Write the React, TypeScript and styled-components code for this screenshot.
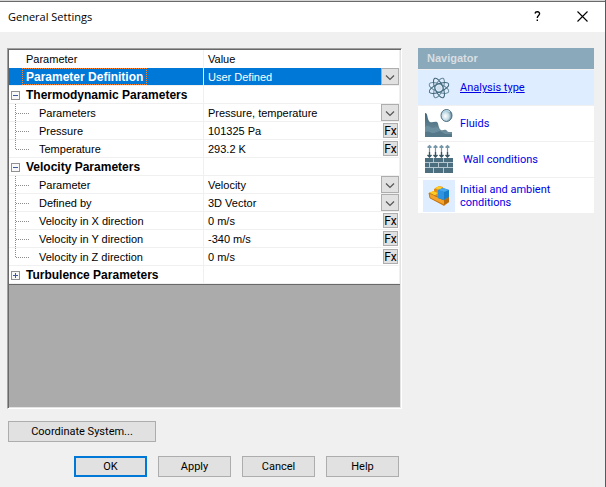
import React, { useState } from "react";
import styled, { createGlobalStyle, css } from "styled-components";

const Global = createGlobalStyle`
  *, *::before, *::after { box-sizing: border-box; }
  body { margin: 0; background: #f0f0f0; }
  button, input, select { font: inherit; color: inherit; margin: 0; }
  svg { display: block; }
`;

const uiFont = css`
  font-family: "Liberation Sans", Arial, sans-serif;
`;

const narrowFont = css`
  font-family: Roboto, "Liberation Sans", sans-serif;
`;

const Dialog = styled.main`
  ${uiFont}
  font-size: 11px;
  color: #000;
  min-height: 100vh;
  display: flex;
  flex-direction: column;
  background: #f0f0f0;
  border-right: 1px solid #58595c;
`;

const TitleBar = styled.header`
  display: flex;
  align-items: center;
  height: 32px;
  flex: none;
  padding-left: 8px;
  background: #fff;
  border-top: 1px solid #d6d6d6;
  box-shadow: inset 0 1px #6a6a6c;
`;

const Title = styled.h1`
  flex: 1;
  margin: 0;
  font: 400 11px/18px "Open Sans", "Noto Sans", sans-serif;
`;

const CaptionButton = styled.button`
  width: 45px;
  height: 28px;
  padding: 0;
  border: 0;
  background: transparent;
  display: grid;
  place-items: center;
`;

const Body = styled.div`
  flex: 1;
  display: flex;
  gap: 16px;
  padding: 16px 11px 10px 7px;
`;

const Editor = styled.section`
  flex: 1;
  min-width: 0;
  display: flex;
  flex-direction: column;
`;

const Pane = styled.div`
  flex: 1;
  background: #ababab;
  border: 1px solid;
  border-color: #a0a0a0 #fff #fff #a0a0a0;
  box-shadow: inset 1px 1px #696969, inset -1px -1px #e3e3e3;
  padding: 1px;
`;

const Grid = styled.table`
  width: 100%;
  table-layout: fixed;
  border-collapse: separate;
  border-spacing: 0;
  background: #fff;
  border-bottom: 1px solid #696969;
`;

const NameColumn = styled.col`
  width: 195px;
`;

const Row = styled.tr<{ $selected?: boolean }>`
  height: 18px;
  color: ${(p) => (p.$selected ? "#fff" : "#000")};
  background: ${(p) => (p.$selected ? "#0078d7" : "#fff")};
`;

const cell = css`
  height: 18px;
  padding: 0;
  border-bottom: 1px solid #f0f0f0;
  border-right: 1px solid #f0f0f0;
  text-align: left;
  font-weight: 400;
  line-height: 15px;
  white-space: nowrap;
`;

const HeadCell = styled.th<{ $first?: boolean }>`
  ${cell}
  border-bottom-color: #fff;
  padding-top: 2px;
  padding-left: ${(p) => (p.$first ? 17 : 4)}px;
`;

const NameCell = styled.th`
  ${cell}
`;

const ValueCell = styled.td`
  ${cell}
`;

const NameBox = styled.div`
  display: flex;
  align-items: center;
  height: 17px;
`;

const Gutter = styled.span`
  flex: none;
  width: 13px;
  height: 17px;
  padding-top: 2px;
  display: grid;
  place-items: center;
`;

const Toggle = styled.button`
  width: 9px;
  height: 9px;
  padding: 0;
  border: 0;
  background: none;
  display: block;
`;

const GroupLabel = styled.span<{ $focused?: boolean }>`
  font-weight: 700;
  font-size: 12px;
  line-height: 13px;
  padding: 2px 3px 0;
  border: 1px ${(p) => (p.$focused ? "dotted #ff8728" : "solid transparent")};
`;

const Leaf = styled.label`
  flex: 1;
  padding-top: 2px;
`;

const Branch = styled.svg`
  flex: none;
  width: 30px;
  height: 18px;
  margin-bottom: -1px;
`;

const Field = styled.div`
  display: flex;
  align-items: center;
  height: 17px;
`;

const ValueInput = styled.input`
  flex: 1;
  min-width: 0;
  height: 17px;
  padding: 0 0 0 4px;
  border: 0;
  outline: 0;
  background: transparent;
`;

const FxButton = styled.button`
  ${narrowFont}
  width: 15px;
  height: 15px;
  flex: none;
  margin-right: 1px;
  padding: 0;
  font-size: 12px;
  line-height: 14px;
  border: 1px solid #adadad;
  background: #e1e1e1;
  display: flex;
  justify-content: center;
`;

const Combo = styled.div`
  display: grid;
  grid-template-columns: 1fr 18px;
  height: 17px;
`;

const ComboSelect = styled.select`
  grid-area: 1 / 1 / 2 / 3;
  appearance: none;
  height: 17px;
  padding: 2px 18px 0 4px;
  border: 0;
  outline: 0;
  background: transparent;
`;

const ComboArrow = styled.span`
  grid-area: 1 / 2 / 2 / 3;
  pointer-events: none;
  display: grid;
  place-items: center;
  padding-top: 2px;
  border: 1px solid #adadad;
  background: #e1e1e1;
`;

const PushButton = styled.button<{ $wide?: boolean; $default?: boolean }>`
  ${narrowFont}
  width: ${(p) => (p.$wide ? 148 : 73)}px;
  height: 21px;
  padding: 1px 0 0;
  font-size: 11px;
  line-height: 16px;
  background: #e1e1e1;
  border: ${(p) => (p.$default ? "2px solid #0078d7" : "1px solid #adadad")};
`;

const ToolRow = styled.div`
  display: flex;
  margin: 12px 0 14px 1px;
`;

const ActionRow = styled.div`
  display: flex;
  justify-content: flex-end;
  gap: 11px;
  padding-right: 3px;
`;

const Navigator = styled.nav`
  width: 176px;
  flex: none;
`;

const NavHeader = styled.h2`
  margin: 0;
  height: 21px;
  padding-left: 9px;
  font-size: 11px;
  line-height: 21px;
  font-weight: 700;
  color: #d9dee2;
  background: #8aa9ba;
`;

const NavList = styled.ul`
  margin: 0;
  padding: 1px 0 0;
  list-style: none;
  display: grid;
  gap: 1px;
`;

const NavItem = styled.li<{ $current?: boolean }>`
  display: flex;
  align-items: center;
  min-height: 35px;
  padding-left: 5px;
  background: ${(p) => (p.$current ? "#deedff" : "#fff")};
`;

const NavIcon = styled.svg`
  width: 32px;
  height: 32px;
  flex: none;
`;

const NavLink = styled.a<{ $current?: boolean; $indent?: boolean }>`
  ${narrowFont}
  margin-left: ${(p) => (p.$indent ? 8 : 5)}px;
  color: #0000e6;
  font-size: 11px;
  line-height: 13px;
  text-decoration: ${(p) => (p.$current ? "underline" : "none")};
`;

function Chevron() {
  return (
    <svg width="10" height="7" viewBox="0 0 10 7" aria-hidden="true">
      <path d="M1 1.5l4 4 4-4" fill="none" stroke="#555" strokeWidth="1.2" />
    </svg>
  );
}

function ToggleGlyph({ open }: { open: boolean }) {
  return (
    <svg width="9" height="9" viewBox="0 0 9 9" shapeRendering="crispEdges" aria-hidden="true">
      <rect x="0.5" y="0.5" width="8" height="8" fill="#f8f8f8" stroke="#919191" />
      <path d={open ? "M2 4.5h5" : "M2 4.5h5M4.5 2v5"} stroke="#3c5a9c" />
    </svg>
  );
}

function AtomIcon() {
  return (
    <NavIcon viewBox="0 0 32 32" aria-hidden="true">
      <g fill="none" strokeWidth="1">
        {[22, 67, 112, 157].map((a, i) => (
          <ellipse
            key={a}
            cx="16"
            cy="16"
            rx="10.5"
            ry="4"
            stroke={i % 2 ? "#3f6678" : "#66899a"}
            transform={`rotate(${a} 16 16)`}
          />
        ))}
      </g>
      <circle cx="16" cy="16" r="2.5" fill="#cfe0ec" />
    </NavIcon>
  );
}

function FluidsIcon() {
  return (
    <NavIcon viewBox="0 0 32 32" aria-hidden="true">
      <defs>
        <linearGradient id="liquid" x1="0" y1="0" x2="0" y2="1">
          <stop offset="0" stopColor="#3f6577" />
          <stop offset="1" stopColor="#7795a4" />
        </linearGradient>
        <radialGradient id="drop" cx="0.4" cy="0.55" r="0.6">
          <stop offset="0" stopColor="#fff" />
          <stop offset="0.55" stopColor="#c4dbe6" />
          <stop offset="1" stopColor="#557b8e" />
        </radialGradient>
      </defs>
      <path
        d="M2 5c3 0 2 5 4 8 2 3 5 0 8 1 2 2 1 6 4 8 2 1 3-1 5 0s1 2 3 2h3v5H2z"
        fill="url(#liquid)"
      />
      <path d="M2 19c3-3 5 1 8 1s3-2 6 1l4 4-18 3z" fill="#6c8fa0" />
      <path d="M2 24c4-2 6 2 9 1l6-2 5 3 7 0v3H2z" fill="#56798a" />
      <ellipse cx="23.5" cy="7.5" rx="5.5" ry="6" fill="url(#drop)" stroke="#496e80" />
      <path d="M20 4.5c2-2 5-2 7-.5" fill="none" stroke="#b9d6e4" strokeWidth="1.5" />
    </NavIcon>
  );
}

function WallIcon() {
  return (
    <NavIcon viewBox="0 0 32 32" aria-hidden="true">
      <path
        d="M6.5 8V1.5m-2 2 2-2 2 2m4 4.5V1.5m-2 2 2-2 2 2m4 4.5V1.5m-2 2 2-2 2 2m4 4.5V1.5m-2 2 2-2 2 2"
        fill="none"
        stroke="#7697a7"
        strokeWidth="1.2"
      />
      <path
        d="M6.5 8v5m-2-2 2 2 2-2m4-3v5m-2-2 2 2 2-2m4-3v5m-2-2 2 2 2-2m4-3v5m-2-2 2 2 2-2"
        fill="none"
        stroke="#365564"
        strokeWidth="1.4"
      />
      <path d="M2 14h28v15H2z" fill="#4c6f80" />
      <path
        d="M2 18.5h28M2 23.5h28M10.5 14v4m10-4v4M6.5 19v4m9-4v4m9-4v4M10.5 24v5m10-5v5"
        stroke="#b4c7d0"
        strokeWidth="1"
        shapeRendering="crispEdges"
      />
    </NavIcon>
  );
}

function AmbientIcon() {
  return (
    <NavIcon viewBox="0 0 32 32" aria-hidden="true">
      <path d="M0 0h32v32H0z" fill="#deedff" />
      <path d="M6 13l5-2V9l5-3 4 1v4l6 3v8l-5 4L7 18z" fill="#e28b16" />
      <path d="M6 13l15 7v5L7 18z" fill="#f5a32a" />
      <path d="M6 13l4-2 5 2-4 3zm6-5 4-2 4 2-4 2z" fill="#ffcb25" />
      <path d="M21 20l5-3v5l-5 3z" fill="#b96b0c" />
      <path d="M6 13l15 7M6 13l1 5 14 7" fill="none" stroke="#b36c16" strokeWidth="0.8" />
      <path d="M15 10l5-2 6 2v7l-5 3-6-2z" fill="#157dca" />
      <path d="M15 10l5-2 6 2-5 2z" fill="#48a7ec" />
      <path d="M15 10l6 2v8l-6-2z" fill="#2f93e0" />
    </NavIcon>
  );
}

type Property = { id: string; name: string; value: string; kind: "combo" | "fx" };

const thermodynamic: Property[] = [
  { id: "thermo-set", name: "Parameters", value: "Pressure, temperature", kind: "combo" },
  { id: "pressure", name: "Pressure", value: "101325 Pa", kind: "fx" },
  { id: "temperature", name: "Temperature", value: "293.2 K", kind: "fx" },
];

const velocity: Property[] = [
  { id: "velocity-kind", name: "Parameter", value: "Velocity", kind: "combo" },
  { id: "defined-by", name: "Defined by", value: "3D Vector", kind: "combo" },
  { id: "velocity-x", name: "Velocity in X direction", value: "0 m/s", kind: "fx" },
  { id: "velocity-y", name: "Velocity in Y direction", value: "-340 m/s", kind: "fx" },
  { id: "velocity-z", name: "Velocity in Z direction", value: "0 m/s", kind: "fx" },
];

function ComboField({ id, value, label }: { id: string; value: string; label?: string }) {
  return (
    <Combo>
      <ComboSelect id={id} aria-label={label} defaultValue={value}>
        <option>{value}</option>
      </ComboSelect>
      <ComboArrow>
        <Chevron />
      </ComboArrow>
    </Combo>
  );
}

function PropertyRow({ item, last }: { item: Property; last: boolean }) {
  return (
    <Row>
      <NameCell scope="row">
        <NameBox>
          <Branch viewBox="0 0 30 18" shapeRendering="crispEdges" aria-hidden="true">
            <path
              d={last ? "M6.5 0v10M7 9.5h13" : "M6.5 0v18M7 9.5h13"}
              stroke="#8c8c8c"
              strokeDasharray="1 1"
              fill="none"
            />
          </Branch>
          <Leaf htmlFor={item.id}>{item.name}</Leaf>
        </NameBox>
      </NameCell>
      <ValueCell>
        {item.kind === "combo" ? (
          <ComboField id={item.id} value={item.value} />
        ) : (
          <Field>
            <ValueInput id={item.id} defaultValue={item.value} />
            <FxButton type="button" aria-label={`Fx ${item.name}`}>
              Fx
            </FxButton>
          </Field>
        )}
      </ValueCell>
    </Row>
  );
}

function Group({ name, items, startOpen }: { name: string; items: Property[]; startOpen: boolean }) {
  const [open, setOpen] = useState(startOpen);
  return (
    <>
      <Row>
        <NameCell scope="row">
          <NameBox>
            <Gutter>
              <Toggle type="button" aria-label={name} aria-expanded={open} onClick={() => setOpen(!open)}>
                <ToggleGlyph open={open} />
              </Toggle>
            </Gutter>
            <GroupLabel>{name}</GroupLabel>
          </NameBox>
        </NameCell>
        <ValueCell />
      </Row>
      {open && items.map((it, i) => <PropertyRow key={it.id} item={it} last={i === items.length - 1} />)}
    </>
  );
}

export default function App() {
  return (
    <>
      <Global />
      <Dialog>
        <TitleBar>
          <Title>General Settings</Title>
          <CaptionButton type="button" aria-label="Help">
            <svg width="7" height="11" viewBox="0 0 7 11" aria-hidden="true">
              <path
                d="M1 2.5C1.5 0 6 .2 5.5 3 5.2 4.6 3.3 4.5 3.3 7M3.3 8.5v1.5"
                fill="none"
                stroke="#000"
                strokeWidth="1.4"
              />
            </svg>
          </CaptionButton>
          <CaptionButton type="button" aria-label="Close">
            <svg width="11" height="11" viewBox="0 0 11 11" aria-hidden="true">
              <path d="M.5.5l10 10M10.5.5l-10 10" stroke="#000" strokeWidth="1.1" />
            </svg>
          </CaptionButton>
        </TitleBar>
        <Body>
          <Editor>
            <Pane>
              <Grid>
                <colgroup>
                  <NameColumn />
                  <col />
                </colgroup>
                <thead>
                  <Row>
                    <HeadCell scope="col" $first>
                      Parameter
                    </HeadCell>
                    <HeadCell scope="col">Value</HeadCell>
                  </Row>
                </thead>
                <tbody>
                  <Row $selected>
                    <NameCell scope="row">
                      <NameBox>
                        <Gutter />
                        <GroupLabel $focused>Parameter Definition</GroupLabel>
                      </NameBox>
                    </NameCell>
                    <ValueCell>
                      <ComboField id="definition" label="Parameter Definition" value="User Defined" />
                    </ValueCell>
                  </Row>
                  <Group name="Thermodynamic Parameters" items={thermodynamic} startOpen />
                  <Group name="Velocity Parameters" items={velocity} startOpen />
                  <Group name="Turbulence Parameters" items={[]} startOpen={false} />
                </tbody>
              </Grid>
            </Pane>
            <ToolRow>
              <PushButton type="button" $wide>
                Coordinate System...
              </PushButton>
            </ToolRow>
            <ActionRow>
              <PushButton type="button" $default>
                OK
              </PushButton>
              <PushButton type="button">Apply</PushButton>
              <PushButton type="button">Cancel</PushButton>
              <PushButton type="button">Help</PushButton>
            </ActionRow>
          </Editor>
          <Navigator aria-label="Navigator">
            <NavHeader>Navigator</NavHeader>
            <NavList>
              <NavItem $current>
                <AtomIcon />
                <NavLink href="#analysis" $current>
                  Analysis type
                </NavLink>
              </NavItem>
              <NavItem>
                <FluidsIcon />
                <NavLink href="#fluids">Fluids</NavLink>
              </NavItem>
              <NavItem>
                <WallIcon />
                <NavLink href="#wall" $indent>
                  Wall conditions
                </NavLink>
              </NavItem>
              <NavItem>
                <AmbientIcon />
                <NavLink href="#ambient">Initial and ambient conditions</NavLink>
              </NavItem>
            </NavList>
          </Navigator>
        </Body>
      </Dialog>
    </>
  );
}
